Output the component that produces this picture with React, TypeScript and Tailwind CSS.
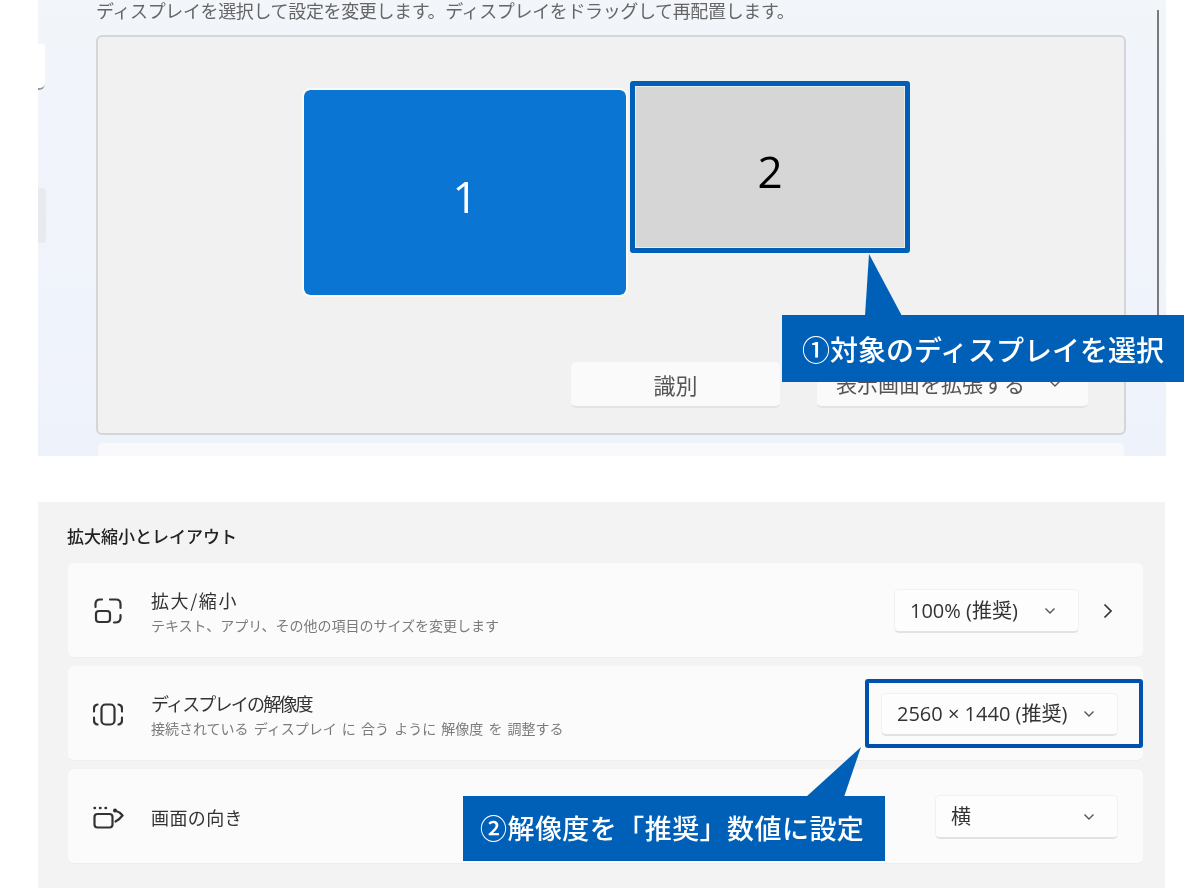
const jp = "font-['Noto_Sans_CJK_JP','Noto_Sans',sans-serif]";

function Chevron({ className = "" }: { className?: string }) {
  return (
    <svg width="12" height="8" viewBox="0 0 12 8" fill="none" className={className}>
      <path d="M1.5 1.5 L6 6 L10.5 1.5" stroke="#555" strokeWidth="1.4" />
    </svg>
  );
}

function Select({ label, w, h }: { label: string; w: string; h: string }) {
  return (
    <div className={`${w} ${h} flex items-center justify-between pl-[15px] pr-[22px] bg-[#fdfdfd] rounded-[5px] border border-[#f1f1f1] border-b-2 border-b-[#e2e2e2] text-[#333] font-['Open_Sans','Noto_Sans_CJK_JP',sans-serif]`}>
      <span className="whitespace-pre text-[20px] leading-[26px]">{label}</span>
      <Chevron />
    </div>
  );
}

function IconScale() {
  return (
    <svg width="28" height="26" viewBox="0 0 28 26" fill="none" stroke="#333" strokeWidth="2.2" strokeLinecap="round">
      <rect x="2" y="13" width="14" height="11" rx="3" />
      <path d="M1.5 9 V6 Q1.5 1.5 6 1.5 H8" />
      <path d="M16 1.5 H22 Q26.5 1.5 26.5 6 V10" />
      <path d="M26.5 17 V20 Q26.5 24.5 21 24.5 H20" />
    </svg>
  );
}

function IconRes() {
  return (
    <svg width="30" height="23" viewBox="0 0 30 23" fill="none" stroke="#333" strokeWidth="2.2" strokeLinecap="round">
      <rect x="8.5" y="1.5" width="13" height="20" rx="4" />
      <path d="M4.5 1.5 Q1 2 1 5.5 V8.5" />
      <path d="M1 14.5 V17.5 Q1 21 4.5 21.5" />
      <path d="M25.5 1.5 Q29 2 29 5.5 V8.5" />
      <path d="M29 14.5 V17.5 Q29 21 25.5 21.5" />
    </svg>
  );
}

function IconOrient() {
  return (
    <svg width="31" height="23" viewBox="0 0 31 23" fill="none" stroke="#333" strokeWidth="2.2" strokeLinecap="round">
      <rect x="1.5" y="8" width="18" height="13.5" rx="3" />
      <path d="M1.5 2 H2 M7 2 H7.5 M12.5 2 H13" strokeWidth="2.4" />
      <circle cx="22" cy="4.5" r="2" fill="#222" stroke="none" />
      <path d="M22 4.5 Q27 6 29.5 9.5 Q27 13 22.5 15.5" />
    </svg>
  );
}

function Row({ icon, title, titleClass, sub, subClass = "", children }: { icon: React.ReactNode; title: string; titleClass: string; sub?: string; subClass?: string; children: React.ReactNode }) {
  return (
    <div className="h-[95px] bg-[#fbfbfb] rounded-[6px] flex items-center pt-[2px] pl-[24px] pr-[25px] border-b border-[#ededed]">
      <div className="w-[32px] flex justify-center">{icon}</div>
      <div className="ml-[27px] flex-1 flex flex-col">
        <span className={`text-[18px] leading-[24px] text-[#333] ${titleClass}`}>{title}</span>
        {sub && <span className={`text-[14px] leading-[20px] text-[#7a7a7a] mt-[3px] whitespace-pre ${subClass}`}>{sub}</span>}
      </div>
      {children}
    </div>
  );
}

export default function App() {
  return (
    <div className={`${jp} w-[1200px] h-[890px] bg-white overflow-hidden blur-[0.5px]`}>
      {/* Upper panel */}
      <section className="relative ml-[38px] w-[1128px] h-[456px] pl-[58px] pr-[40px] bg-gradient-to-b from-[#f2f5fa] to-[#eef2fb]">
        <p className="h-[20px] text-[18px] tracking-[-0.36px] leading-[20px] text-[#666] whitespace-nowrap">
          ディスプレイを選択して設定を変更します。ディスプレイをドラッグして再配置します。
        </p>
        <div className="relative mt-[15px] h-[400px] bg-[#f1f1f1] rounded-[6px] border-2 border-[#d4d5d8] flex justify-end items-end gap-[37px] pr-[36px] pb-[25px]">
          <button className="w-[209px] h-[46px] bg-[#fafafa] rounded-[5px] border-b-2 border-[#e3e3e3] text-[22px] text-[#555]">識別</button>
          <div className="w-[271px] h-[46px] bg-[#fafafa] rounded-[5px] border-b-2 border-[#e3e3e3] flex items-center pl-[19px] text-[21px] text-[#555]">
            <span>表示画面を拡張する</span>
            <Chevron className="ml-[24px]" />
          </div>
          {/* Monitors */}
          <div className="absolute left-[206px] top-[53px] w-[322px] h-[205px] pt-[6px] bg-[#0a75d3] rounded-[6px] flex items-center justify-center text-white text-[44px] font-medium font-['Open_Sans'] outline-2 outline-[#fbfaf5]">
            1
          </div>
          <div className="absolute left-[532px] top-[44px] w-[280px] h-[172px] pt-[8px] bg-[#d6d6d6] rounded-[3px] border-[5px] border-[#0060b8] outline -outline-offset-[6px] outline-[#ececec] flex items-center justify-center text-black text-[44px] font-medium font-['Open_Sans']">
            2
          </div>
        </div>
        <div className="mt-[8px] mx-[2px] h-[13px] bg-[#f9f9fb] rounded-t-[5px]" />

        {/* Left rail remnants */}
        <div className="absolute left-0 top-[44px] w-[7px] h-[46px] bg-white rounded-br-[6px] border-b-2 border-[#999]" />
        <div className="absolute left-0 top-[188px] w-[8px] h-[55px] bg-[#e9eaef] rounded-r-[4px]" />
        {/* Scrollbar */}
        <div className="absolute left-[1119px] top-[10px] w-[2px] h-[306px] bg-[#7a7a7a]" />

        {/* Callout 1 */}
        <svg className="absolute left-[825px] top-[254px]" width="40" height="62" viewBox="0 0 40 62">
          <polygon points="6,0 2,62 39,62" fill="#0060b8" />
        </svg>
        <div className="absolute left-[744px] top-[315px] w-[402px] h-[67px] bg-[#0060b8] flex items-center pl-[20px] text-white text-[28px] font-medium whitespace-nowrap">
          ①対象のディスプレイを選択
        </div>
      </section>

      {/* Lower panel */}
      <section className="relative mt-[46px] ml-[38px] w-[1127px] h-[386px] bg-[#f3f3f3] pl-[30px] pr-[22px] pt-[22px]">
        <h2 className="text-[17px] leading-[24px] font-medium text-[#222] -ml-[1px]">拡大縮小とレイアウト</h2>
        <div className="mt-[15px] flex flex-col gap-2">
          <Row icon={<IconScale />} title="拡大/縮小" titleClass="tracking-[1.6px]" sub="テキスト、アプリ、その他の項目のサイズを変更します">
            <Select label="100% (推奨)" w="w-[185px]" h="h-[44px]" />
            <svg width="10" height="16" viewBox="0 0 10 16" fill="none" className="ml-[24px] mr-[5px]">
              <path d="M1.5 1.5 L8 8 L1.5 14.5" stroke="#333" strokeWidth="1.7" />
            </svg>
          </Row>
          <Row icon={<IconRes />} title="ディスプレイの解像度" titleClass="tracking-[-1.8px]" sub="接続されている ディスプレイ に 合う ように 解像度 を 調整する" subClass="[word-spacing:2px]">
            <Select label="2560 × 1440 (推奨)" w="w-[237px]" h="h-[43px]" />
          </Row>
          <Row icon={<IconOrient />} title="画面の向き" titleClass="tracking-[0.4px]">
            <Select label="横" w="w-[183px]" h="h-[44px]" />
          </Row>
        </div>

        {/* Highlight + callout 2 */}
        <div className="absolute left-[827px] top-[177px] w-[278px] h-[69px] border-[4px] border-[#0050b0] rounded-[3px]" />
        <svg className="absolute left-[768px] top-[245px]" width="56" height="50" viewBox="0 0 56 50">
          <polygon points="55,0 0,50 38,50" fill="#0060b8" />
        </svg>
        <div className="absolute left-[425px] top-[294px] w-[422px] h-[65px] bg-[#0060b8] flex items-center pl-[17px] text-white text-[27px] tracking-[0.45px] font-medium whitespace-nowrap">
          ②解像度を「推奨」数値に設定
        </div>
      </section>
    </div>
  );
}
